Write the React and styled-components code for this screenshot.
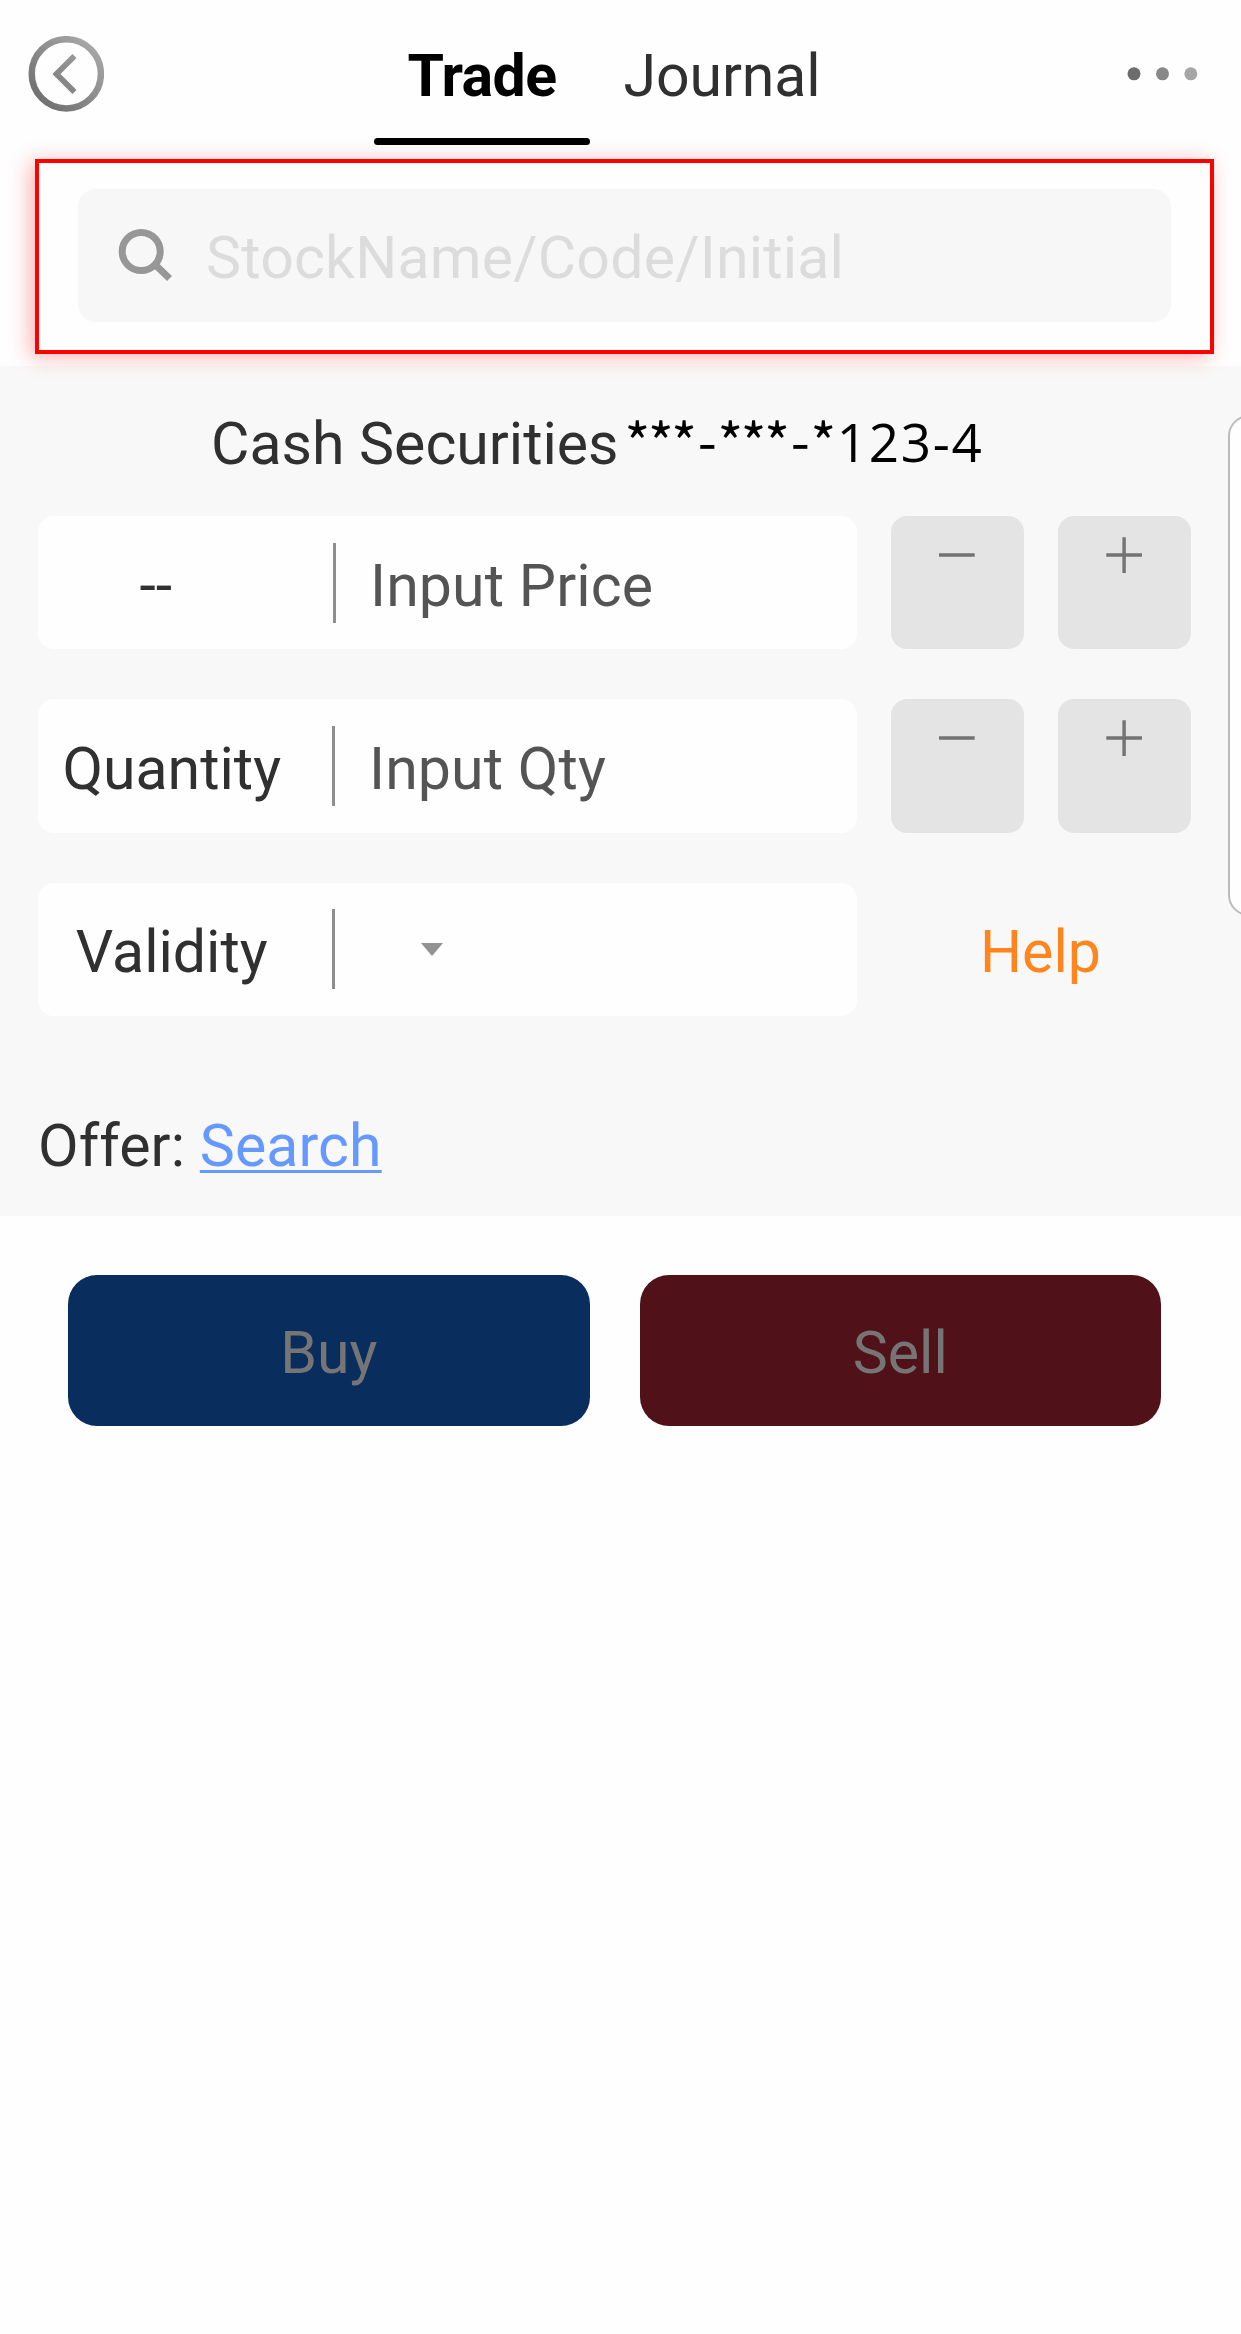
import React from 'react';
import styled, { createGlobalStyle } from 'styled-components';

const GlobalStyle = createGlobalStyle`
  body {
    margin: 0;
    background: #fefefe;
  }

  * {
    box-sizing: border-box;
  }
`;

const PageContainer = styled.div`
  position: relative;
  width: 1241px;
  min-height: 2334px;
  overflow: hidden;
  background: #fefefe;
  color: #303030;
  font-family: Roboto, "Liberation Sans", sans-serif;
  font-size: 59px;
  line-height: 70px;
`;

const Header = styled.header`
  display: flex;
  height: 145px;
  padding: 0 42px 0 28px;
`;

const BackButton = styled.button`
  width: 76px;
  height: 76px;
  margin: 36px 270px 0 0;
  padding: 0;
  border: none;
  background: none;
`;

const Tab = styled.div`
  display: flex;
  flex-direction: column;
  justify-content: space-between;
  width: ${(props) => (props.$active ? '216px' : 'auto')};
  padding-top: 41px;
  padding-left: ${(props) => (props.$active ? '0' : '33.5px')};
  color: ${(props) => (props.$active ? '#000' : '#303030')};
  font-weight: ${(props) => (props.$active ? 700 : 400)};
  letter-spacing: ${(props) => (props.$active ? '-0.6px' : '-0.1px')};
  text-align: center;
`;

const TabLine = styled.div`
  height: 7px;
  border-radius: 4px;
  background: #000;
`;

const MoreButton = styled.button`
  width: 72px;
  height: 14px;
  margin: 67px 0 0 auto;
  padding: 0;
  border: none;
  background: none;
`;

const Svg = styled.svg`
  display: block;
`;

const SearchFrame = styled.div`
  position: relative;
  z-index: 1;
  height: 195px;
  margin: 14px 27px 12px 35px;
  padding: 26px 39px;
  border: 4px solid #ff0000;
  box-shadow: -5px 3px 20px rgba(255, 0, 0, 0.3);
  background: #fefefe;
`;

const SearchField = styled.div`
  display: flex;
  align-items: center;
  height: 133px;
  padding-left: 40px;
  border-radius: 18px;
  background: #f7f7f7;
`;

const SearchText = styled.span`
  margin-left: 33px;
  padding-top: 5px;
  color: #dcdcdc;
  letter-spacing: 0.2px;
`;

const OrderForm = styled.section`
  height: 849.5px;
  padding: 43px 50px 0 38px;
  background: #f8f8f8;
`;

const Account = styled.div`
  display: flex;
  height: 70px;
  margin-bottom: 37px;
  padding-left: 173px;
`;

const AccountNumber = styled.span`
  display: flex;
  margin-left: 6px;
  color: #000;
`;

const Mask = styled.span`
  font-family: "Noto Sans CJK SC", sans-serif;
  font-size: 55px;
  line-height: 63px;
  letter-spacing: -2.3px;
`;

const Dash = styled.span`
  padding: 0 3px;
  line-height: 1;
  vertical-align: 2px;
`;

const Digits = styled.span`
  margin-left: 3px;
  font-family: "Open Sans", sans-serif;
  font-size: 53px;
  line-height: 66px;
  letter-spacing: 1.7px;
`;

const Rows = styled.div`
  display: flex;
  flex-direction: column;
  gap: 50.1px;
`;

const Row = styled.div`
  display: flex;
  height: 133.3px;
`;

const Field = styled.div`
  display: flex;
  align-items: center;
  width: 819px;
  border-radius: 16px;
  background: #fefefe;
`;

const FieldLabel = styled.span`
  width: ${(props) => (props.$wide ? '294.5px' : '293.5px')};
  padding-top: 6px;
  padding-right: ${(props) => (props.$wide ? '59px' : '26px')};
  text-align: center;
`;

const Divider = styled.div`
  width: 3.5px;
  height: 80px;
  background: #8e8e8e;
`;

const FieldInput = styled.span`
  padding-top: 6px;
  padding-left: 34px;
  color: #545454;
  letter-spacing: 0.1px;
`;

const Caret = styled.div`
  margin-left: 86px;
  border-top: 13px solid #929292;
  border-right: 11.5px solid transparent;
  border-left: 11.5px solid transparent;
`;

const StepButton = styled.button`
  width: 133.3px;
  margin-left: 33.7px;
  padding: 21px 0 0 48px;
  border: none;
  border-radius: 16px;
  background: #e4e4e4;
  display: flex;
  align-items: flex-start;
`;

const HelpLink = styled.a`
  margin-left: 123px;
  padding-top: 34px;
  color: #ff851f;
`;

const Offer = styled.div`
  margin-top: 95px;
  letter-spacing: 0.1px;
`;

const SearchLink = styled.a`
  color: #6699ff;
  text-decoration: underline;
  text-decoration-thickness: 3px;
  text-underline-offset: 4px;
`;

const Actions = styled.div`
  display: flex;
  gap: 50px;
  padding: 59.5px 80px 0 68px;
`;

const ActionButton = styled.button`
  flex: 1;
  height: 151px;
  padding: 5px 0 0;
  border: none;
  border-radius: 29px;
  background: ${(props) => props.$color};
  color: #757575;
  font: inherit;
`;

// drawer handle that hangs over the right edge
const SideHandle = styled.div`
  position: absolute;
  top: 415px;
  right: -30px;
  width: 43px;
  height: 501px;
  border: 2px solid #bcbcbc;
  border-radius: 21px;
  background: #fefefe;
`;

function MinusIcon() {
  return (
    <Svg width="36" height="36" viewBox="0 0 36 36" stroke="#737373" strokeWidth="3.4">
      <path d="M0 18H35.7" />
    </Svg>
  );
}

function PlusIcon() {
  return (
    <Svg width="36" height="36" viewBox="0 0 36 36" stroke="#737373" strokeWidth="3.4">
      <path d="M0.3 18H36M18.1 0.3V36" />
    </Svg>
  );
}

function Stepper() {
  return (
    <>
      <StepButton><MinusIcon /></StepButton>
      <StepButton><PlusIcon /></StepButton>
    </>
  );
}

function App() {
  return (
    <PageContainer>
      <GlobalStyle />
      <Header>
        <BackButton>
          <Svg width="76" height="76" viewBox="0 0 76 76" fill="none">
            <defs>
              <linearGradient id="back" gradientUnits="userSpaceOnUse" x1="12" y1="66" x2="64" y2="10">
                <stop offset="0" stopColor="#707070" />
                <stop offset="1" stopColor="#a6a6a6" />
              </linearGradient>
            </defs>
            <circle cx="38.3" cy="37.8" r="34.6" stroke="url(#back)" strokeWidth="6.5" />
            <path d="M46.5 20L28.5 38L46.5 56" stroke="url(#back)" strokeWidth="5.8" />
          </Svg>
        </BackButton>
        <Tab $active>
          Trade
          <TabLine />
        </Tab>
        <Tab>Journal</Tab>
        <MoreButton>
          <Svg width="72" height="14" viewBox="0 0 72 14">
            <circle cx="7" cy="6.8" r="6.5" fill="#6c6c6c" />
            <circle cx="35.5" cy="6.8" r="6.5" fill="#888" />
            <circle cx="63.8" cy="6.8" r="6.5" fill="#a6a6a6" />
          </Svg>
        </MoreButton>
      </Header>

      <SearchFrame>
        <SearchField>
          <Svg width="55" height="53" viewBox="0 0 55 53" fill="none" stroke="#979797">
            <circle cx="23.2" cy="22.5" r="19" strokeWidth="7" />
            <path d="M37 35.5L51.5 49.5" strokeWidth="7" />
          </Svg>
          <SearchText>StockName/Code/Initial</SearchText>
        </SearchField>
      </SearchFrame>

      <OrderForm>
        <Account>
          Cash Securities
          <AccountNumber>
            <Mask>***<Dash>-</Dash>***<Dash>-</Dash>*</Mask>
            <Digits>123-4</Digits>
          </AccountNumber>
        </Account>
        <Rows>
          <Row>
            <Field>
              <FieldLabel $wide>--</FieldLabel>
              <Divider />
              <FieldInput>Input Price</FieldInput>
            </Field>
            <Stepper />
          </Row>
          <Row>
            <Field>
              <FieldLabel>Quantity</FieldLabel>
              <Divider />
              <FieldInput>Input Qty</FieldInput>
            </Field>
            <Stepper />
          </Row>
          <Row>
            <Field>
              <FieldLabel>Validity</FieldLabel>
              <Divider />
              <Caret />
            </Field>
            <HelpLink>Help</HelpLink>
          </Row>
        </Rows>
        <Offer>
          Offer: <SearchLink>Search</SearchLink>
        </Offer>
      </OrderForm>

      <Actions>
        <ActionButton $color="#092d5c">Buy</ActionButton>
        <ActionButton $color="#511119">Sell</ActionButton>
      </Actions>

      <SideHandle />
    </PageContainer>
  );
}

export default App;
